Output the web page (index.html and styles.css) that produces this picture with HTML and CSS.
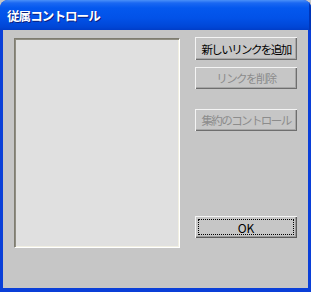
FILE: index.html
```html
<!DOCTYPE html>
<html lang="ja">
<head>
  <meta charset="UTF-8" />
  <title>従属コントロール</title>
  <link rel="stylesheet" href="styles.css">
</head>
<body>
  <div class="window">
    <div class="titlebar">
      <span class="title">従属コントロール</span>
    </div>
    <div class="client">
      <div class="listbox"></div>
      <div class="buttons">
        <button class="btn">新しいリンクを追加</button>
        <button class="btn" disabled>リンクを削除</button>
        <button class="btn btn-group" disabled>集約のコントロール</button>
        <div class="spacer"></div>
        <button class="btn btn-default"><span class="focus">OK</span></button>
      </div>
    </div>
  </div>
</body>
</html>
```

FILE: styles.css
```css
* {
  margin: 0;
  padding: 0;
  box-sizing: border-box;
}

body {
  font-family: "Noto Sans CJK JP", "Liberation Sans", sans-serif;
  font-size: 12px;
  background: #c6c6c6;
}

.window {
  width: 311px;
  height: 292px;
  display: flex;
  flex-direction: column;
  background: #0a3fd8;
  border-radius: 8px 8px 0 0;
  overflow: hidden;
}

.titlebar {
  height: 30px;
  display: flex;
  align-items: center;
  padding-left: 7px;
  background: linear-gradient(#4a90f8 0px, #1a68f2 3px, #0458ee 8px, #0252e8 18px, #0046d6 27px, #003dc8 30px);
  box-shadow: inset -2px 0 0 #0035b8;
}

.title {
  color: #fff;
  font-weight: bold;
  font-size: 12.5px;
  letter-spacing: -0.9px;
  text-shadow: 1px 1px 0 #0a1e80;
}

.client {
  flex: 1;
  display: flex;
  margin: 0 3px 4px 3px;
  padding: 7px 0 0 11px;
  background: #c6c6c6;
}

.listbox {
  width: 166px;
  height: 210px;
  margin-top: 1px;
  background: #e0e0e0;
  border-top: 1px solid #7e7c70;
  border-left: 1px solid #7e7c70;
  border-right: 1px solid #fff;
  border-bottom: 1px solid #fff;
  box-shadow: inset 1px 1px 0 #8f8d82, inset -1px -1px 0 #f1efe2;
}

.buttons {
  display: flex;
  flex-direction: column;
  margin-left: 15px;
  width: 102px;
}

.btn {
  height: 23px;
  margin-bottom: 7px;
  padding: 0;
  font-family: inherit;
  font-size: 11.5px;
  letter-spacing: -1.6px;
  white-space: nowrap;
  color: #000;
  background: #c6c6c6;
  border: none;
  box-shadow: inset 1px 1px 0 #f4f4f4, inset -1px -1px 0 #6e6e6e, inset -2px -2px 0 #a6a6a6;
  display: flex;
  align-items: center;
  justify-content: center;
}

.btn:disabled {
  color: #8c8c8c;
  height: 22px;
}

.btn-group {
  margin-top: 13px;
}

.spacer {
  flex: 1;
}

.btn-default {
  height: 22px;
  margin-bottom: 50px;
  padding: 3px;
  letter-spacing: 0;
  font-size: 12px;
  box-shadow: inset 1px 1px 0 #f4f4f4, inset -1px -1px 0 #5a5a5a, inset -2px -2px 0 #9a9a9a;
}

.focus {
  width: 100%;
  height: 100%;
  border: 1px dotted #000;
  display: flex;
  align-items: center;
  justify-content: center;
}
```
